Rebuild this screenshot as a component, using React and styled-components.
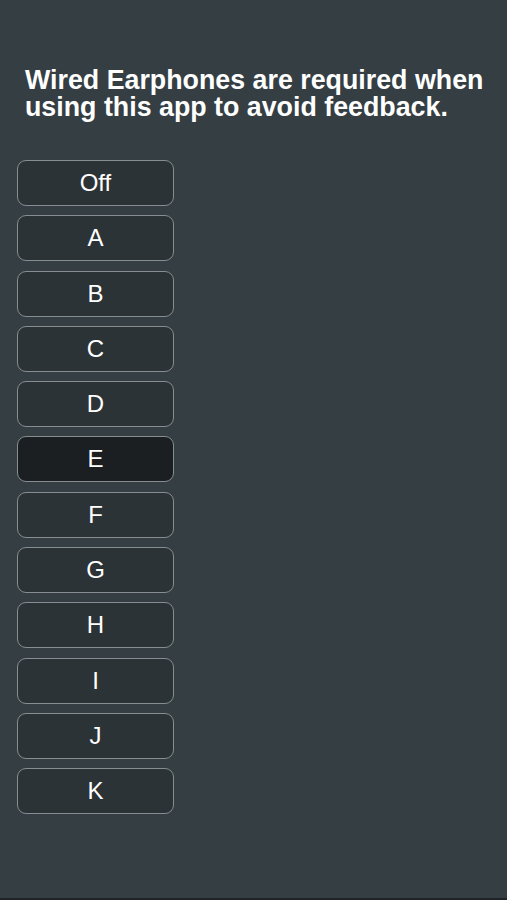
import React from 'react';
import styled, { createGlobalStyle } from 'styled-components';

const Global = createGlobalStyle`
  html, body { margin: 0; padding: 0; background: #353e43; }
  body { font-family: "Liberation Sans", Arial, sans-serif; }
`;

const Screen = styled.div`
  width: 507px;
  height: 900px;
  box-sizing: border-box;
  background: #353e43;
  border-bottom: 2px solid #1e2427;
  padding: 67px 0 0 25px;
  display: flex;
  flex-direction: column;
`;

const Notice = styled.h1`
  margin: 0;
  color: #ffffff;
  font-size: 26.8px;
  line-height: 27px;
  font-weight: 700;
  width: 480px;
`;

const Options = styled.div`
  display: flex;
  flex-direction: column;
  gap: 9.3px;
  margin: 39px 0 0 -8px;
`;

const Option = styled.button`
  width: 157px;
  height: 46px;
  box-sizing: border-box;
  border: 1.5px solid #878d91;
  border-radius: 9px;
  background: ${p => (p.active ? '#1b1f21' : '#2c3337')};
  color: #ffffff;
  font-family: "Liberation Sans", Arial, sans-serif;
  font-size: 24px;
  padding: 0;
  display: flex;
  align-items: center;
  justify-content: center;
`;

const levels = ['Off', 'A', 'B', 'C', 'D', 'E', 'F', 'G', 'H', 'I', 'J', 'K'];

export default function App() {
  return (
    <>
      <Global />
      <Screen>
        <Notice>Wired Earphones are required when using this app to avoid feedback.</Notice>
        <Options>
          {levels.map(l => (
            <Option key={l} active={l === 'E'}>{l}</Option>
          ))}
        </Options>
      </Screen>
    </>
  );
}
